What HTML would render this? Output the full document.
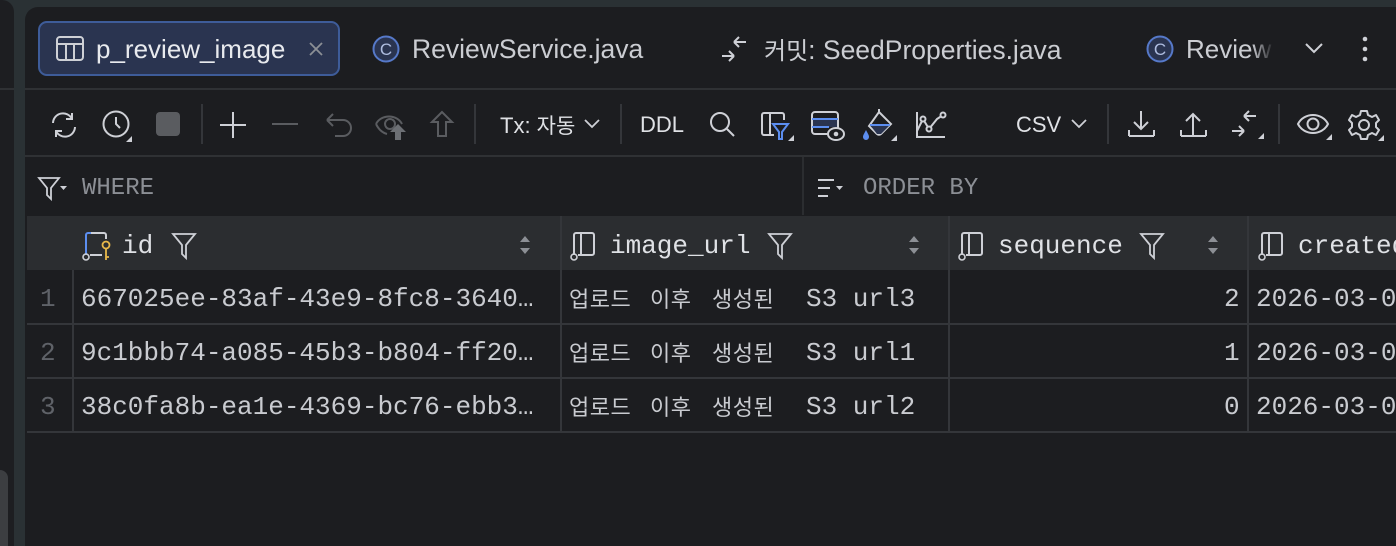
<!DOCTYPE html>
<html><head><meta charset="utf-8"><style>
*{margin:0;padding:0;box-sizing:border-box}
html{width:1396px;height:546px;overflow:hidden}
body{width:1396px;height:546px;background:#2a3134;overflow:hidden;position:relative;font-family:"Liberation Sans","Noto Sans CJK KR",sans-serif;color:#dfe1e5}
.abs{position:absolute}
.left{left:0;top:0;width:14px;height:546px;background:#1d1e21;border-radius:0 12px 0 0}
.main{left:25px;top:7px;width:1371px;height:539px;background:#1c1d20;border-radius:13px 0 0 0;overflow:hidden}
.t{position:absolute;font-size:25px;line-height:30px;white-space:nowrap;color:#cbcdd2}
.mono{font-family:"Liberation Mono","Noto Sans CJK KR",monospace;font-size:26px;line-height:30px;white-space:nowrap;position:absolute}
.k{font-family:"Noto Sans CJK KR",sans-serif;font-size:24px;line-height:30px}
.kw{position:absolute;font-family:"Noto Sans CJK KR",sans-serif;font-size:22px;line-height:30px;letter-spacing:0.5px;color:#c9cbd0;white-space:nowrap}
.hl{position:absolute;height:2px;background:#34363a}
.vl{position:absolute;width:2px;background:#34363a}
svg{position:absolute;overflow:visible}
</style></head><body>
<div class="abs left"></div>
<div class="abs" style="left:0;top:88px;width:14px;height:2px;background:#2f3134"></div>
<div class="abs" style="left:0;top:470px;width:8px;height:76px;background:#3c3e41;border-radius:0 8px 0 0"></div>
<div class="abs main"></div>

<!-- tabs -->
<div class="abs" style="left:38px;top:21px;width:302px;height:55px;background:#2a3450;border:2px solid #3e5c99;border-radius:9px"></div>
<svg style="left:56px;top:36px" width="28" height="26" viewBox="0 0 28 26"><rect x="1" y="1" width="26" height="23" rx="3" fill="none" stroke="#ced0d6" stroke-width="2"/><line x1="1" y1="8" x2="27" y2="8" stroke="#ced0d6" stroke-width="2"/><line x1="10" y1="8" x2="10" y2="24" stroke="#ced0d6" stroke-width="2"/><line x1="18" y1="8" x2="18" y2="24" stroke="#ced0d6" stroke-width="2"/></svg>
<div class="t" style="left:96px;top:34px;color:#e8eaee;font-size:26px">p_review_image</div>
<svg style="left:308px;top:41px" width="16" height="16"><path d="M2 2L14 14M14 2L2 14" stroke="#8c8f95" stroke-width="1.8"/></svg>
<svg style="left:372px;top:35px" width="28" height="28"><circle cx="14" cy="14" r="12.5" fill="#2a3450" stroke="#5679c9" stroke-width="2"/><text x="14" y="20" text-anchor="middle" font-size="17" fill="#aebcdf" font-family="Liberation Sans">C</text></svg>
<div class="t" style="left:412px;top:34px;font-size:26.5px">ReviewService.java</div>
<svg style="left:720px;top:35px" width="32" height="28"><path d="M14 7H26M14 7L19 2M14 7L19 12M2 21H14M14 21L9 16M14 21L9 26" stroke="#ced0d6" stroke-width="2" fill="none"/></svg>
<div class="t" style="left:764px;top:34px;font-size:26.5px"><span class="k" style="font-size:24px">커밋</span>: SeedProperties.java</div>
<svg style="left:1146px;top:35px" width="28" height="28"><circle cx="14" cy="14" r="12.5" fill="#2a3450" stroke="#5679c9" stroke-width="2"/><text x="14" y="20" text-anchor="middle" font-size="17" fill="#aebcdf" font-family="Liberation Sans">C</text></svg>
<div class="t" style="left:1186px;top:34px;width:88px;overflow:hidden;font-size:26px;-webkit-mask-image:linear-gradient(90deg,#000 75%,transparent)">Review</div>
<svg style="left:1304px;top:42px" width="20" height="12"><path d="M2 2L10 10L18 2" stroke="#ced0d6" stroke-width="2" fill="none"/></svg>
<svg style="left:1362px;top:36px" width="6" height="26"><circle cx="3" cy="3" r="2.3" fill="#ced0d6"/><circle cx="3" cy="13" r="2.3" fill="#ced0d6"/><circle cx="3" cy="23" r="2.3" fill="#ced0d6"/></svg>
<div class="hl" style="left:25px;top:88px;width:1371px;background:#2f3134"></div>

<!-- toolbar -->
<svg style="left:48px;top:111px" width="32" height="28" stroke="#ced0d6" stroke-width="2" fill="none"><path d="M5 12A10 10 0 0 1 24 8M27 16A10 10 0 0 1 8 20M24 2V8H18M8 26V20H14"/></svg>
<svg style="left:102px;top:110px" width="32" height="32" stroke="#ced0d6" stroke-width="2" fill="none"><circle cx="14" cy="14" r="12.5"/><path d="M14 7V14L18 18"/><path d="M30 26V32H24Z" fill="#ced0d6" stroke="none"/></svg>
<div class="abs" style="left:156px;top:112px;width:24px;height:24px;background:#5a5c60;border-radius:4px"></div>
<div class="vl" style="left:201px;top:104px;height:40px"></div>
<svg style="left:220px;top:111px" width="28" height="28" stroke="#ced0d6" stroke-width="2"><path d="M13 1V27M0 14H26"/></svg>
<svg style="left:272px;top:122px" width="28" height="4" stroke="#5a5c60" stroke-width="2"><path d="M0 2H26"/></svg>
<svg style="left:325px;top:111px" width="30" height="28" stroke="#5a5c60" stroke-width="2" fill="none"><path d="M2 9H18A8 8 0 0 1 18 25H10M2 9L8 3M2 9L8 15"/></svg>
<svg style="left:374px;top:110px" width="36" height="32" fill="none"><path d="M2 14C7 4 23 4 28 14" stroke="#5a5c60" stroke-width="2"/><path d="M2 14C5 20 9 23 13 24" stroke="#5a5c60" stroke-width="2"/><circle cx="16" cy="14" r="5" stroke="#5a5c60" stroke-width="2"/><path d="M24 14L32 22H27V30H21V22H16Z" fill="#6c6f74"/></svg>
<svg style="left:430px;top:110px" width="26" height="28" stroke="#5a5c60" stroke-width="2" fill="none"><path d="M12 2L2 12H8V26H16V12H22Z"/></svg>
<div class="vl" style="left:474px;top:104px;height:40px"></div>
<div class="t" style="left:500px;top:110px;font-size:22px;color:#dfe1e5">Tx: <span class="k" style="font-size:21px">자동</span></div>
<svg style="left:584px;top:119px" width="16" height="10"><path d="M1 1L8 8L15 1" stroke="#ced0d6" stroke-width="1.8" fill="none"/></svg>
<div class="vl" style="left:620px;top:104px;height:40px"></div>
<div class="t" style="left:640px;top:110px;font-size:22px;color:#dfe1e5">DDL</div>
<svg style="left:709px;top:111px" width="28" height="28" stroke="#ced0d6" stroke-width="2" fill="none"><circle cx="11" cy="11" r="9"/><path d="M18 18L25 25"/></svg>
<svg style="left:760px;top:111px" width="34" height="32" fill="none"><path d="M14 24H4A2 2 0 0 1 2 22V4A2 2 0 0 1 4 2H22A2 2 0 0 1 24 4V9M10 2V24" stroke="#ced0d6" stroke-width="2"/><path d="M13 13H28L22 21V28H19V21Z" stroke="#5c8ef0" stroke-width="2"/><path d="M34 24V30H28Z" fill="#ced0d6"/></svg>
<svg style="left:811px;top:111px" width="34" height="32" fill="none"><rect x="1" y="1" width="26" height="22" rx="3" stroke="#ced0d6" stroke-width="2"/><rect x="2" y="8" width="24" height="8" fill="#2a3450"/><path d="M1 8H27M1 16H18" stroke="#5c8ef0" stroke-width="2"/><ellipse cx="25" cy="23" rx="8" ry="6" fill="#1c1d20" stroke="#ced0d6" stroke-width="2"/><circle cx="25" cy="23" r="2.3" fill="#ced0d6"/></svg>
<svg style="left:861px;top:109px" width="36" height="34" fill="none"><path d="M18 3L30 15L20 25A3 3 0 0 1 16 25L8 17Z" stroke="#ced0d6" stroke-width="2"/><path d="M9 16H29L20 25H16Z" fill="#2a3450"/><path d="M9 16H29" stroke="#5c8ef0" stroke-width="2"/><path d="M18 3V0" stroke="#ced0d6" stroke-width="2"/><path d="M5 21C3 25 2 26 2 28A3 3 0 0 0 8 28C8 26 7 25 5 21Z" fill="#5c8ef0"/><path d="M36 26V32H30Z" fill="#ced0d6"/></svg>
<svg style="left:915px;top:111px" width="32" height="28" fill="none" stroke="#ced0d6" stroke-width="2"><path d="M2 1V26H30M2 20L8 8L14 18L22 8L28 4"/><circle cx="8" cy="8" r="2.5" fill="#1c1d20"/><circle cx="14" cy="18" r="2.5" fill="#1c1d20"/><circle cx="28" cy="4" r="2.5" fill="#1c1d20"/></svg>
<div class="t" style="left:1016px;top:110px;font-size:22px;color:#dfe1e5">CSV</div>
<svg style="left:1071px;top:119px" width="16" height="10"><path d="M1 1L8 8L15 1" stroke="#ced0d6" stroke-width="1.8" fill="none"/></svg>
<div class="vl" style="left:1107px;top:104px;height:40px"></div>
<svg style="left:1128px;top:110px" width="28" height="28" fill="none" stroke="#ced0d6" stroke-width="2"><path d="M13 1V19M6 12L13 19L20 12M1 26H26M1 20V26M26 20V26"/></svg>
<svg style="left:1180px;top:110px" width="28" height="28" fill="none" stroke="#ced0d6" stroke-width="2"><path d="M13 26V4M6 11L13 4L20 11M1 26H26M1 20V26M26 20V26"/></svg>
<svg style="left:1230px;top:109px" width="36" height="34" fill="none"><path d="M14 7H26M14 7L19 2M14 7L19 12M2 22H14M14 22L9 17M14 22L9 27" stroke="#ced0d6" stroke-width="2"/><path d="M34 24V30H28Z" fill="#ced0d6"/></svg>
<div class="vl" style="left:1278px;top:104px;height:40px"></div>
<svg style="left:1296px;top:110px" width="36" height="32" fill="none"><path d="M2 14C8 2 26 2 32 14C26 26 8 26 2 14Z" stroke="#ced0d6" stroke-width="2"/><circle cx="17" cy="14" r="5.5" stroke="#ced0d6" stroke-width="2"/><path d="M36 24V30H30Z" fill="#ced0d6"/></svg>
<svg style="left:1348px;top:109px" width="36" height="34" fill="none"><path d="M13 2H19L20 6L24 8L28 6L31 11L28 14V18L31 21L28 26L24 24L20 26L19 30H13L12 26L8 24L4 26L1 21L4 18V14L1 11L4 6L8 8L12 6Z" stroke="#ced0d6" stroke-width="2" stroke-linejoin="round"/><circle cx="16" cy="16" r="5" stroke="#ced0d6" stroke-width="2"/><path d="M36 26V32H30Z" fill="#ced0d6"/></svg>
<div class="hl" style="left:25px;top:155px;width:1371px;background:#2f3134"></div>

<!-- filter row -->
<svg style="left:38px;top:177px" width="32" height="24" fill="none"><path d="M1 1H21L13 11V22L9 18V11Z" stroke="#ced0d6" stroke-width="1.8"/><path d="M22 9H29L25.5 13Z" fill="#ced0d6"/></svg>
<div class="mono" style="left:82px;top:174px;font-size:24px;color:#8c8f95">WHERE</div>
<div class="vl" style="left:802px;top:157px;height:58px;background:#2b2d30"></div>
<svg style="left:818px;top:178px" width="32" height="22" fill="none" stroke="#ced0d6" stroke-width="2"><path d="M0 2H16M0 10H12M0 18H10"/><path d="M18 8H25L21.5 12Z" fill="#ced0d6" stroke="none"/></svg>
<div class="mono" style="left:863px;top:174px;font-size:24px;color:#8c8f95">ORDER BY</div>

<!-- header -->
<div class="abs" style="left:27px;top:216px;width:1369px;height:54px;background:#2b2d30"></div>
<svg style="left:82px;top:231px" width="34" height="30" fill="none"><path d="M4 24V4A2 2 0 0 1 6 2H9" stroke="#5c8ef0" stroke-width="2"/><path d="M9 2H22A2 2 0 0 1 24 4V8M8 24H20" stroke="#ced0d6" stroke-width="2"/><circle cx="4" cy="26" r="3" stroke="#ced0d6" stroke-width="1.6"/><circle cx="24" cy="14" r="3.5" stroke="#e8b84a" stroke-width="1.8"/><path d="M24 18V29M24 26H27" stroke="#e8b84a" stroke-width="1.8"/></svg>
<div class="mono" style="left:122px;top:231px;color:#dfe1e5">id</div>
<svg style="left:172px;top:233px" width="24" height="26" fill="none"><path d="M1 1H23L14 12V25L10 21V12Z" stroke="#ced0d6" stroke-width="1.8"/></svg>
<svg style="left:520px;top:236px" width="10" height="18" fill="#8c8f95"><path d="M5 0L10 6H0ZM5 18L0 12H10Z"/></svg>
<div class="vl" style="left:560px;top:216px;height:216px"></div>
<svg style="left:570px;top:231px" width="34" height="30" fill="none" stroke="#ced0d6" stroke-width="2"><path d="M4 24V4A2 2 0 0 1 6 2H22A2 2 0 0 1 24 4V22A2 2 0 0 1 22 24H8M11 2V24"/><circle cx="4" cy="26" r="3" stroke-width="1.6"/></svg>
<div class="mono" style="left:610px;top:231px;color:#dfe1e5">image_url</div>
<svg style="left:768px;top:233px" width="24" height="26" fill="none"><path d="M1 1H23L14 12V25L10 21V12Z" stroke="#ced0d6" stroke-width="1.8"/></svg>
<svg style="left:909px;top:236px" width="10" height="18" fill="#8c8f95"><path d="M5 0L10 6H0ZM5 18L0 12H10Z"/></svg>
<div class="vl" style="left:948px;top:216px;height:216px"></div>
<svg style="left:958px;top:231px" width="34" height="30" fill="none" stroke="#ced0d6" stroke-width="2"><path d="M4 24V4A2 2 0 0 1 6 2H22A2 2 0 0 1 24 4V22A2 2 0 0 1 22 24H8M11 2V24"/><circle cx="4" cy="26" r="3" stroke-width="1.6"/></svg>
<div class="mono" style="left:998px;top:231px;color:#dfe1e5">sequence</div>
<svg style="left:1140px;top:233px" width="24" height="26" fill="none"><path d="M1 1H23L14 12V25L10 21V12Z" stroke="#ced0d6" stroke-width="1.8"/></svg>
<svg style="left:1208px;top:236px" width="10" height="18" fill="#8c8f95"><path d="M5 0L10 6H0ZM5 18L0 12H10Z"/></svg>
<div class="vl" style="left:1247px;top:216px;height:216px"></div>
<svg style="left:1258px;top:231px" width="34" height="30" fill="none" stroke="#ced0d6" stroke-width="2"><path d="M4 24V4A2 2 0 0 1 6 2H22A2 2 0 0 1 24 4V22A2 2 0 0 1 22 24H8M11 2V24"/><circle cx="4" cy="26" r="3" stroke-width="1.6"/></svg>
<div class="mono" style="left:1298px;top:231px;color:#dfe1e5">created_at</div>

<!-- rows -->
<div class="vl" style="left:72px;top:270px;height:162px"></div>
<div class="hl" style="left:27px;top:323px;width:1369px"></div>
<div class="hl" style="left:27px;top:377px;width:1369px"></div>
<div class="hl" style="left:27px;top:431px;width:1369px"></div>

<div class="mono" style="left:40px;top:284px;color:#5f6268">1</div>
<div class="mono" style="left:40px;top:338px;color:#5f6268">2</div>
<div class="mono" style="left:40px;top:392px;color:#5f6268">3</div>

<div class="mono" style="left:81px;top:284px;color:#c9cbd0">667025ee-83af-43e9-8fc8-3640…</div>
<div class="mono" style="left:81px;top:338px;color:#c9cbd0">9c1bbb74-a085-45b3-b804-ff20…</div>
<div class="mono" style="left:81px;top:392px;color:#c9cbd0">38c0fa8b-ea1e-4369-bc76-ebb3…</div>

<div class="kw" style="left:569px;top:283px">업로드</div><div class="kw" style="left:650px;top:283px">이후</div><div class="kw" style="left:712px;top:283px">생성된</div><div class="mono" style="left:806px;top:284px;color:#c9cbd0">S3 url3</div>
<div class="kw" style="left:569px;top:337px">업로드</div><div class="kw" style="left:650px;top:337px">이후</div><div class="kw" style="left:712px;top:337px">생성된</div><div class="mono" style="left:806px;top:338px;color:#c9cbd0">S3 url1</div>
<div class="kw" style="left:569px;top:391px">업로드</div><div class="kw" style="left:650px;top:391px">이후</div><div class="kw" style="left:712px;top:391px">생성된</div><div class="mono" style="left:806px;top:392px;color:#c9cbd0">S3 url2</div>

<div class="mono" style="left:1224px;top:284px;color:#c9cbd0">2</div>
<div class="mono" style="left:1224px;top:338px;color:#c9cbd0">1</div>
<div class="mono" style="left:1224px;top:392px;color:#c9cbd0">0</div>

<div class="mono" style="left:1256px;top:284px;color:#c9cbd0">2026-03-01</div>
<div class="mono" style="left:1256px;top:338px;color:#c9cbd0">2026-03-01</div>
<div class="mono" style="left:1256px;top:392px;color:#c9cbd0">2026-03-01</div>
</body></html>
